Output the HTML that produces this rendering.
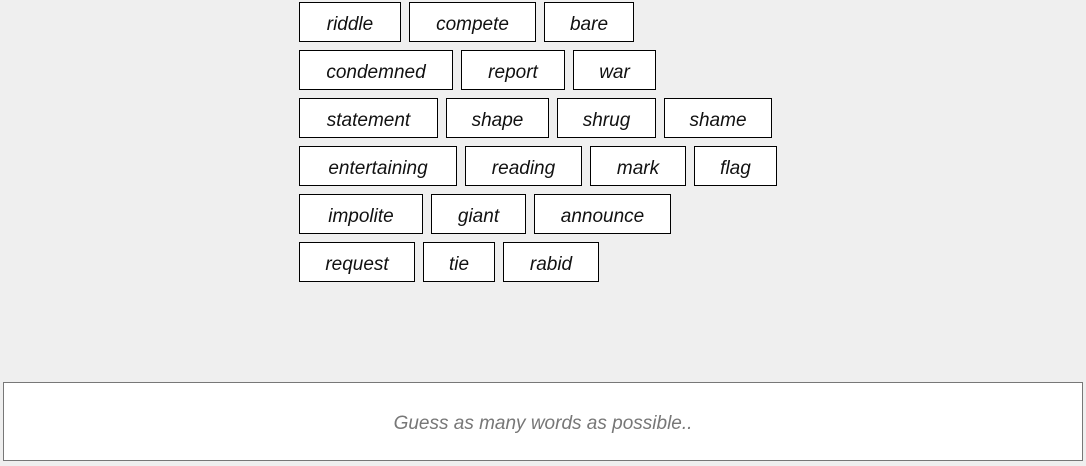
<!DOCTYPE html>
<html><head><style>
html,body{margin:0;padding:0;}
body{width:1086px;height:466px;background:#efefef;position:relative;overflow:hidden;font-family:"Liberation Sans","DejaVu Sans",sans-serif;}
.b{position:absolute;height:38px;border:1px solid #000;background:#fff;box-sizing:content-box;text-align:center;line-height:43px;font-style:italic;font-size:19px;color:#111;}
.in{position:absolute;left:3px;top:382px;width:1078px;height:77px;border:1px solid #777;background:#fff;text-align:center;line-height:82px;font-size:19px;font-style:italic;color:#777;}
</style></head><body>
<div class="b" style="left:299px;top:2px;width:100px">riddle</div>
<div class="b" style="left:409px;top:2px;width:125px">compete</div>
<div class="b" style="left:544px;top:2px;width:88px">bare</div>
<div class="b" style="left:299px;top:50px;width:152px">condemned</div>
<div class="b" style="left:461px;top:50px;width:102px">report</div>
<div class="b" style="left:573px;top:50px;width:81px">war</div>
<div class="b" style="left:299px;top:98px;width:137px">statement</div>
<div class="b" style="left:446px;top:98px;width:101px">shape</div>
<div class="b" style="left:557px;top:98px;width:97px">shrug</div>
<div class="b" style="left:664px;top:98px;width:106px">shame</div>
<div class="b" style="left:299px;top:146px;width:156px">entertaining</div>
<div class="b" style="left:465px;top:146px;width:115px">reading</div>
<div class="b" style="left:590px;top:146px;width:94px">mark</div>
<div class="b" style="left:694px;top:146px;width:81px">flag</div>
<div class="b" style="left:299px;top:194px;width:122px">impolite</div>
<div class="b" style="left:431px;top:194px;width:93px">giant</div>
<div class="b" style="left:534px;top:194px;width:135px">announce</div>
<div class="b" style="left:299px;top:242px;width:114px">request</div>
<div class="b" style="left:423px;top:242px;width:70px">tie</div>
<div class="b" style="left:503px;top:242px;width:94px">rabid</div>
<div class="in">Guess as many words as possible..</div>
</body></html>
